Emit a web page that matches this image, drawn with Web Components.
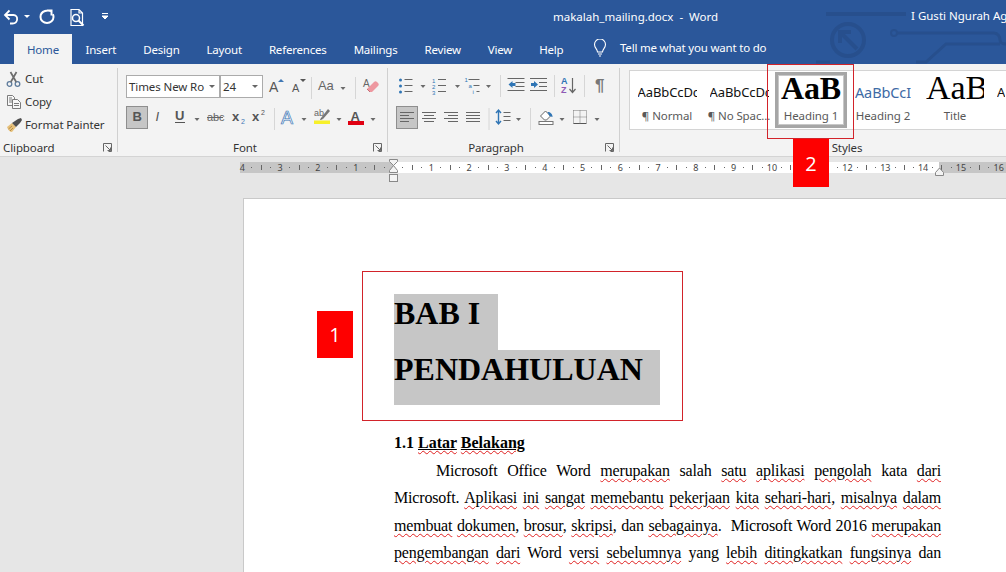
<!DOCTYPE html>
<html>
<head>
<meta charset="utf-8">
<title>makalah_mailing.docx - Word</title>
<style>
  html, body { margin: 0; height: 100%; overflow: hidden; background: #e6e6e6; }
  body { font-family: "Noto Sans", "Open Sans", sans-serif; }
</style>
</head>
<body>

<word-app>

  <word-titlebar title-text="makalah_mailing.docx  -  Word" user="I Gusti Ngurah Ag"></word-titlebar>

  <word-tabs></word-tabs>

  <word-ribbon>

    <ribbon-group label="Clipboard" width="118" launcher top="3">
      <clip-row icon="cut">Cut</clip-row>
      <clip-row icon="copy">Copy</clip-row>
      <clip-row icon="painter">Format Painter</clip-row>
    </ribbon-group>

    <ribbon-group label="Font" width="270" launcher pad="8" top="11" gap="8">
      <ribbon-row>
        <font-box w="94" caret>Times New Ro</font-box>
        <font-box w="43" caret>24</font-box>
        <r-icon name="grow" w="22"></r-icon>
        <r-icon name="shrink" w="22"></r-icon>
        <r-icon name="sep" w="8"></r-icon>
        <r-icon name="case" w="22"></r-icon>
        <r-icon name="caret" w="12"></r-icon>
        <r-icon name="sep" w="12"></r-icon>
        <r-icon name="eraser" w="20"></r-icon>
      </ribbon-row>
      <ribbon-row>
        <r-icon name="bold" w="22" on></r-icon>
        <r-icon name="italic" w="21"></r-icon>
        <r-icon name="underline" w="22"></r-icon>
        <r-icon name="caret" w="12"></r-icon>
        <r-icon name="strike" w="24"></r-icon>
        <r-icon name="sub" w="22"></r-icon>
        <r-icon name="sup" w="18"></r-icon>
        <r-icon name="sep" w="14"></r-icon>
        <r-icon name="effects" w="16"></r-icon>
        <r-icon name="caret" w="14"></r-icon>
        <r-icon name="highlight" w="22"></r-icon>
        <r-icon name="caret" w="12"></r-icon>
        <r-icon name="fontcolor" w="22"></r-icon>
        <r-icon name="caret" w="12"></r-icon>
      </ribbon-row>
    </ribbon-group>

    <ribbon-group label="Paragraph" width="232" launcher pad="8" top="9" gap="10">
      <ribbon-row>
        <r-icon name="bullets" w="21"></r-icon>
        <r-icon name="caret" w="12"></r-icon>
        <r-icon name="numbers" w="22"></r-icon>
        <r-icon name="caret" w="13"></r-icon>
        <r-icon name="multilevel" w="19"></r-icon>
        <r-icon name="caret" w="11"></r-icon>
        <r-icon name="sep" w="12"></r-icon>
        <r-icon name="outdent" w="21"></r-icon>
        <r-icon name="indent" w="22"></r-icon>
        <r-icon name="sep" w="10"></r-icon>
        <r-icon name="sort" w="20"></r-icon>
        <r-icon name="sep" w="10"></r-icon>
        <r-icon name="pilcrow" w="22"></r-icon>
      </ribbon-row>
      <ribbon-row>
        <r-icon name="left" w="22" on></r-icon>
        <r-icon name="center" w="22"></r-icon>
        <r-icon name="right" w="22"></r-icon>
        <r-icon name="justify" w="22"></r-icon>
        <r-icon name="sep" w="9"></r-icon>
        <r-icon name="spacing" w="21"></r-icon>
        <r-icon name="caret" w="9"></r-icon>
        <r-icon name="sep" w="14"></r-icon>
        <r-icon name="shading" w="19"></r-icon>
        <r-icon name="caret" w="12"></r-icon>
        <r-icon name="borders" w="24"></r-icon>
        <r-icon name="caret" w="10"></r-icon>
      </ribbon-row>
    </ribbon-group>

    <ribbon-group label="Styles" width="454" pad="9" top="6">
      <style-gallery>
        <style-item name="¶ Normal" sample="AaBbCcDc"></style-item>
        <style-item name="¶ No Spac..." sample="AaBbCcDc"></style-item>
        <style-item name="Heading 1" sample="AaB" kind="h1" selected></style-item>
        <style-item name="Heading 2" sample="AaBbCcI" kind="h2"></style-item>
        <style-item name="Title" sample="AaB" kind="title"></style-item>
        <style-item name="" sample="A"></style-item>
      </style-gallery>
    </ribbon-group>

  </word-ribbon>

  <word-ruler></word-ruler>

  <word-page>
    <doc-heading width="104">BAB I</doc-heading>
    <doc-heading width="266">PENDAHULUAN</doc-heading>
    <doc-subhead>1.1 <spell-word under>Latar</spell-word> <spell-word under>Belakang</spell-word></doc-subhead>
    <doc-para>Microsoft Office Word <spell-word>merupakan</spell-word> salah <spell-word>satu</spell-word> <spell-word>aplikasi</spell-word> <spell-word>pengolah</spell-word> kata <spell-word>dari</spell-word><br>Microsoft. <spell-word>Aplikasi</spell-word> <spell-word>ini</spell-word> <spell-word>sangat</spell-word> <spell-word>memebantu</spell-word> <spell-word>pekerjaan</spell-word> <spell-word>kita</spell-word> <spell-word>sehari-hari</spell-word>, <spell-word>misalnya</spell-word> <spell-word>dalam</spell-word><br><spell-word>membuat</spell-word> <spell-word>dokumen</spell-word>, <spell-word>brosur</spell-word>, <spell-word>skripsi</spell-word>, dan <spell-word>sebagainya</spell-word>.&nbsp; Microsoft Word 2016 <spell-word>merupakan</spell-word><br><spell-word>pengembangan</spell-word> <spell-word>dari</spell-word> Word <spell-word>versi</spell-word> <spell-word>sebelumnya</spell-word> yang <spell-word>lebih</spell-word> <spell-word>ditingkatkan</spell-word> <spell-word>fungsinya</spell-word> dan</doc-para>
  </word-page>

  <!-- tutorial annotations drawn over the screenshot -->
  <call-out box="362,271,321,150"></call-out>
  <call-out badge="1" box="317,311,36,47"></call-out>
  <call-out box="767,64,87,75"></call-out>
  <call-out badge="2" box="793,139,36,48"></call-out>

</word-app>

<script>

const UI_FONT = '"Noto Sans", "Open Sans", sans-serif';

// every icon is drawn in a 16x16 box, centred in its cell
const T = ( x, y, size, fill, str, extra = '' ) =>
  `<text x="${ x }" y="${ y }" font-size="${ size }" fill="${ fill }" font-family="Liberation Sans, sans-serif" ${ extra }>${ str }</text>`;

const lines = ( list, stroke = '#666' ) =>
  list.map( l => `<path d="M${ l[ 0 ] } ${ l[ 2 ] }H${ l[ 1 ] }" stroke="${ stroke }" fill="none"/>` ).join( '' );

const ICONS = {

  caret: `<path d="M5.5 8h5l-2.5 3z" fill="#6a6a6a"/>`,
  sep: `<path d="M8.5 -2v22" stroke="#d6d6d6" fill="none"/>`,

  cut: `<g fill="none"><circle cx="3.5" cy="13" r="2.3" stroke="#5f7c9c" stroke-width="1.3"/><circle cx="11.5" cy="13" r="2.3" stroke="#5f7c9c" stroke-width="1.3"/><path d="M4.8 11 10.5 1M10.2 11 4.5 1" stroke="#6d6d6d" stroke-width="1.7"/></g>`,
  copy: `<g fill="#f8f8f8" stroke="#6d6d6d" stroke-width=".9"><path d="M1.500 1.500h5l2 2v8h-7z"/><path d="M3 4h3M3 6h3M3 8h3" fill="none"/><path d="M6.500 5.500h5l3 3v6h-8z"/><path d="M8 9.500h5M8 11.500h5" fill="none"/></g>`,
  painter: `<path d="M1 10 6 6l4 4-4 5c-2 0-4-2-5-5z" fill="#e6c07a"/><path d="M2.500 12 6 9M4 14l3-3" stroke="#b78d45" fill="none"/><path d="M6 6l6-4 3-1 1 2-2 3-4 4z" fill="#4f4f4f"/>`,

  grow: T( 3, 13, 14, '#555', 'A' ) + `<path d="M12 3h6l-3-3z" fill="#3f78b5"/>`,
  shrink: T( 4, 13, 11, '#555', 'A' ) + `<path d="M12 0h6l-3 3z" fill="#555"/>`,
  case: T( 0, 11, 13, '#666', 'Aa' ),
  eraser: T( 0, 8, 10, '#666', 'A' ) + `<path d="M4 10 11 3c1-1 2-1 3 0l1 1c1 1 1 2 0 3l-6 6H7z" fill="#ee98a0"/><path d="M4 10l3 3" stroke="#c87078"/>`,

  bold: T( 3.5, 11, 13, '#555', 'B', 'font-weight="700"' ),
  italic: T( 5, 11, 13, '#555', 'I', 'font-style="italic" font-family="Liberation Serif, serif"' ),
  underline: T( 3, 10, 13, '#555', 'U', 'font-weight="700"' ) + `<path d="M3 12.500h10" stroke="#555" fill="none"/>`,
  strike: T( 0, 11, 11, '#666', 'abc' ) + `<path d="M0 7.500h16" stroke="#666" fill="none"/>`,
  sub: T( 2, 11, 13, '#555', 'x', 'font-weight="700"' ) + T( 11, 14, 7, '#3f78b5', '2' ),
  sup: T( 2, 11, 13, '#555', 'x', 'font-weight="700"' ) + T( 11, 5, 7, '#555', '2' ),
  effects: T( 0, 14, 18, '#eef4fb', 'A', 'stroke="#3f78b5" stroke-width=".7"' ),
  highlight: T( 0, 6, 9, '#666', 'ab' ) + `<path d="M7 8 14 -1l2 2-7 8z" fill="#777"/><path d="M7 8l-1 2 3-1z" fill="#444"/><rect x="0" y="10.500" width="16" height="3.500" fill="#f7f02a"/>`,
  fontcolor: T( 2.5, 10.500, 13, '#555', 'A', 'font-weight="700"' ) + `<rect x="0" y="11" width="16" height="4" fill="#e00012"/>`,

  bullets: `<g fill="#2f75b5"><circle cx="2" cy="3" r="1.5"/><circle cx="2" cy="9" r="1.5"/><circle cx="2" cy="15" r="1.5"/></g>` + lines( [ [ 6, 14, 2.5 ], [ 6, 14, 8.5 ], [ 6, 14, 14.5 ] ] ),
  numbers: T( 0, 5.5, 6, '#2f75b5', '1' ) + T( 0, 11.5, 6, '#2f75b5', '2' ) + T( 0, 17.5, 6, '#2f75b5', '3' ) + lines( [ [ 6, 14, 2.5 ], [ 6, 14, 8.5 ], [ 6, 14, 14.5 ] ] ),
  multilevel: T( -1, 5, 6, '#2f75b5', '1' ) + T( 3, 11, 6, '#2f75b5', 'a' ) + T( 7, 17, 6, '#2f75b5', 'i' ) + lines( [ [ 3, 14, 2.5 ], [ 8, 14, 8.5 ], [ 11, 14, 14.5 ] ] ),
  outdent: lines( [ [ -1, 16, 1.5 ], [ 7, 16, 5.5 ], [ 7, 16, 9.5 ], [ -1, 16, 13.5 ] ] ) + `<path d="M0 7.5 4 4v2h3v3H4v2z" fill="#2f75b5"/>`,
  indent: lines( [ [ 0, 17, 1.5 ], [ 9, 17, 5.5 ], [ 9, 17, 9.5 ], [ 0, 17, 13.5 ] ] ) + `<path d="M8 7.5 4 4v2H1v3h3v2z" fill="#2f75b5"/>`,
  sort: T( 0, 7, 9, '#2f75b5', 'A', 'font-weight="700"' ) + T( 0, 16, 9, '#8e5ab5', 'Z', 'font-weight="700"' ) + `<path d="M11.5 1v14M8.5 12l3 3.5 3-3.5" stroke="#666" stroke-width="1.2" fill="none"/>`,
  pilcrow: T( 3, 14, 17, '#777', '¶', 'font-weight="700"' ),

  left: lines( [ [ 1, 15, 2.5 ], [ 1, 10, 5.5 ], [ 1, 15, 8.5 ], [ 1, 10, 11.5 ] ] ),
  center: lines( [ [ 1, 15, 2.5 ], [ 3, 13, 5.5 ], [ 1, 15, 8.5 ], [ 3, 13, 11.5 ] ] ),
  right: lines( [ [ 1, 15, 2.5 ], [ 5, 15, 5.5 ], [ 1, 15, 8.5 ], [ 5, 15, 11.5 ] ] ),
  justify: lines( [ [ 1, 15, 2.5 ], [ 1, 15, 5.5 ], [ 1, 15, 8.5 ], [ 1, 15, 11.5 ] ] ),
  spacing: `<path d="M3 0v14M0.5 3 3 0l2.5 3M0.5 11 3 14l2.5-3" stroke="#2f75b5" stroke-width="1.4" fill="none"/>` + lines( [ [ 8, 15, 2.5 ], [ 8, 15, 6.5 ], [ 8, 15, 10.5 ] ] ),
  shading: `<path d="M2 6 7 1l5 5-4 4H6z" fill="#fff" stroke="#666"/><path d="M9 2c3 0 5 2 5 5l-3-1z" fill="#2f75b5"/><rect x="0.5" y="11.500" width="14" height="3" fill="#fff" stroke="#777"/>`,
  borders: `<path d="M1.5 13.500h13" stroke="#555" fill="none"/><path d="M1.5 .5h13v13M1.5 .5v13M8 .5v13M1.5 7h13" stroke="#777" stroke-dasharray="1 1" fill="none"/>`

};

class RIcon extends HTMLElement {

  connectedCallback () {

    const w = +this.getAttribute( 'w' ) || 22;
    const on = this.hasAttribute( 'on' );
    const shadow = this.attachShadow( { mode: 'open' } );

    shadow.innerHTML = `
      <style>
        :host { display: block; flex: 0 0 ${ w }px; width: ${ w }px; height: 23px; box-sizing: border-box; }
        :host([on]) { background: #c6c6c6; border: 1px solid #8e8e8e; }
        svg { display: block; overflow: visible; }
      </style>
      <svg width="${ on ? w - 2 : w }" height="${ on ? 21 : 23 }" viewBox="0 0 ${ on ? w - 2 : w } ${ on ? 21 : 23 }">
        <g transform="translate(${ ( ( on ? w - 2 : w ) - 16 ) / 2 }, ${ on ? 3 : 4 })">${ ICONS[ this.getAttribute( 'name' ) ] || '' }</g>
      </svg>
    `;

  }

}

class WordApp extends HTMLElement {

  constructor () {

    super();
    this.attachShadow( { mode: 'open' } ).innerHTML = `
      <style>
        :host { display: flex; flex-direction: column; position: relative; width: 1006px; height: 572px; overflow: hidden; background: #e6e6e6; }
      </style>
      <slot></slot>
    `;

  }

}

class WordTitlebar extends HTMLElement {

  connectedCallback () {

    this.attachShadow( { mode: 'open' } ).innerHTML = `
      <style>
        :host { display: flex; flex: 0 0 34px; position: relative; z-index: 1; align-items: center; color: #fff; font: 11.5px ${ UI_FONT }; background: #2b579a; white-space: pre; }
        .qat { display: flex; flex: 0 0 553px; align-items: center; }
        .title { position: relative; margin-top: -1px; }
        .user { position: relative; margin-left: auto; width: 95px; overflow: hidden; margin-top: -3px; }
        .circuit { position: absolute; left: 810px; top: 0; }
      </style>
      <svg class="circuit" width="196" height="64" fill="none" stroke="#274f8d" stroke-width="3">
        <path d="M16 14H96" stroke-width="4"/>
        <circle cx="38" cy="40" r="16" stroke-width="4"/>
        <path d="M47 49 31 33M30 43V32H41" stroke-width="4"/>
        <circle cx="84" cy="33" r="3" stroke-width="2"/>
        <path d="M87 33H184c4 0 6 4 6 7 0 2 2 4 6 4M190 44H136L116 62H106M6 62H20"/>
      </svg>
      <div class="qat">
        <svg width="130" height="34" fill="none" stroke="#fff" stroke-width="1.8">
          <path d="M9.500 10.500 5 15l4.500 4.500M5 15h8.500c5 0 5 8.500-1 8.500H10"/>
          <path d="M24 15h6l-3 3z" fill="#fff" stroke="none"/>
          <path d="M47 10.500h4.500V15.500M51 11c-2-.7-4-.7-6 0-3 1-4.500 3.500-4.500 6 0 3.500 3 6 6.500 6s6.500-2.500 6.500-6c0-1-.2-2-.6-2.800" stroke-width="2"/>
          <path d="M79 9.500h-8v16h11.500V13zM79 9.500V13h3.500" stroke-width="1.200"/>
          <circle cx="76" cy="18" r="3.500" stroke-width="1.500"/>
          <path d="M78.500 20.500l5 5" stroke-width="2"/>
          <path d="M102 13.500h6M102 16h6l-3 3z" fill="#fff" stroke-width="1"/>
        </svg>
      </div>
      <div class="title">${ this.getAttribute( 'title-text' ) }</div>
      <div class="user">${ this.getAttribute( 'user' ) }</div>
    `;

  }

}

class WordTabs extends HTMLElement {

  connectedCallback () {

    const tabs = [ 'Home', 'Insert', 'Design', 'Layout', 'References', 'Mailings', 'Review', 'View', 'Help' ];

    this.attachShadow( { mode: 'open' } ).innerHTML = `
      <style>
        :host { display: flex; flex: 0 0 30px; align-items: stretch; padding-left: 14px; color: #fff; font: 11.5px ${ UI_FONT }; letter-spacing: -.2px; background: #2b579a; }
        .tab { display: flex; align-items: center; padding: 0 13.5px 0; }
        .tab.active { width: 58px; box-sizing: border-box; padding: 0; justify-content: center; color: #2b579a; background: #f3f3f3; }
        .tell { display: flex; align-items: center; gap: 13px; margin-left: 16px; margin-top: -3px; }
        svg { display: block; }
      </style>
      ${ tabs.map( ( t, i ) => `<div class="tab ${ i ? '' : 'active' }">${ t }</div>` ).join( '' ) }
      <div class="tell">
        <svg width="14" height="18" fill="none" stroke="#fff" stroke-width="1.100">
          <path d="M4.500 13c0-3-3-4-3-7.500a5.500 5.500 0 0 1 11 0C12.500 9 9.500 10 9.500 13zM5 15h4M6 17h2"/>
        </svg>
        <span>Tell me what you want to do</span>
      </div>
    `;

  }

}

class WordRibbon extends HTMLElement {

  constructor () {

    super();
    this.attachShadow( { mode: 'open' } ).innerHTML = `
      <style>
        :host { display: flex; flex: 0 0 93px; box-sizing: border-box; overflow: hidden; color: #333; font: 11.5px ${ UI_FONT }; letter-spacing: -.1px; background: #f3f3f3; border-bottom: 1px solid #d4d4d4; }
      </style>
      <slot></slot>
    `;

  }

}

class RibbonGroup extends HTMLElement {

  connectedCallback () {

    const width = this.getAttribute( 'width' );
    const pad = this.getAttribute( 'pad' ) || 0;
    const top = this.getAttribute( 'top' ) || 2;
    const gap = this.getAttribute( 'gap' ) || 0;

    this.attachShadow( { mode: 'open' } ).innerHTML = `
      <style>
        :host { display: flex; flex: 0 0 ${ width }px; position: relative; flex-direction: column; box-sizing: border-box; }
        :host::after { content: ""; position: absolute; right: 0; top: 4px; bottom: 4px; width: 1px; background: #d0d0d0; }
        .body { display: flex; flex: 1; flex-direction: column; min-height: 0; gap: ${ gap }px; padding: ${ top }px 0 0 ${ pad }px; }
        .label { display: flex; flex: 0 0 16px; position: relative; align-items: center; justify-content: center; padding-bottom: 1px; }
        :host([launcher]) .label { padding-right: 16px; }
        :host([label="Clipboard"]) .label { justify-content: flex-start; padding-left: 3px; }
        svg { position: absolute; right: 6px; top: 4px; }
      </style>
      <div class="body"><slot></slot></div>
      <div class="label">
        ${ this.getAttribute( 'label' ) }
        ${ this.hasAttribute( 'launcher' ) ? `<svg width="9" height="9" fill="none" stroke="#666"><path d="M.5 8.500v-8h8v8h-3M2.500 2.500l5 5M7.500 4.500v3h-3"/></svg>` : '' }
      </div>
    `;

  }

}

class RibbonRow extends HTMLElement {

  constructor () {

    super();
    this.attachShadow( { mode: 'open' } ).innerHTML = `
      <style>:host { display: flex; align-items: center; height: 23px; }</style>
      <slot></slot>
    `;

  }

}

class ClipRow extends HTMLElement {

  connectedCallback () {

    this.attachShadow( { mode: 'open' } ).innerHTML = `
      <style>
        :host { display: flex; align-items: center; gap: 3px; height: 23px; padding-left: 6px; }
        svg { display: block; overflow: visible; }
      </style>
      <svg width="16" height="16">${ ICONS[ this.getAttribute( 'icon' ) ] }</svg>
      <slot></slot>
    `;

  }

}

class FontBox extends HTMLElement {

  connectedCallback () {

    this.attachShadow( { mode: 'open' } ).innerHTML = `
      <style>
        :host { display: flex; flex: 0 0 ${ this.getAttribute( 'w' ) }px; align-items: center; justify-content: space-between; box-sizing: border-box; height: 23px; padding: 0 4px 0 2px; white-space: nowrap; overflow: hidden; background: #fff; border: 1px solid #ababab; }
        i { flex: none; width: 0; height: 0; border: 3px solid transparent; border-top: 3px solid #666; border-bottom: 0; }
      </style>
      <span><slot></slot></span><i></i>
    `;

  }

}

class StyleGallery extends HTMLElement {

  constructor () {

    super();
    this.attachShadow( { mode: 'open' } ).innerHTML = `
      <style>
        :host { display: flex; height: 60px; box-sizing: border-box; padding-left: 1px; background: #fff; border: 1px solid #d4d4d4; border-right: 0; }
      </style>
      <slot></slot>
    `;

  }

}

class StyleItem extends HTMLElement {

  connectedCallback () {

    const kinds = {
      h1: 'font: 700 32px/30px "Liberation Serif", serif; color: #000; max-width: none; margin-top: -7px;',
      h2: 'font-size: 14.5px; color: #3e6aa5; max-width: 59px;',
      title: 'font: 34px/30px "Liberation Serif", serif; color: #000; max-width: 58px; margin-top: -8px;'
    };

    this.attachShadow( { mode: 'open' } ).innerHTML = `
      <style>
        :host { display: flex; flex: 0 0 72px; flex-direction: column; box-sizing: border-box; align-items: center; overflow: hidden; color: #595959; }
        :host([selected]) { border: 3px solid #a6a6a6; outline: 1px solid #c8c8c8; outline-offset: -4px; height: 56px; margin-top: 1px; }
        .sample { display: flex; flex: 0 0 37px; align-items: center; justify-content: center; box-sizing: border-box; width: 100%; padding-top: 4px; overflow: hidden; white-space: nowrap; }
        :host([selected]) .sample { flex-basis: 33px; padding-top: 0; }
        .name { white-space: nowrap; }
        span { display: block; flex: none; overflow: hidden; max-width: 59px; color: #111; font-size: 13px; line-height: 18px; ${ kinds[ this.getAttribute( 'kind' ) ] || '' } }
        :host([sample="A"]) .sample { justify-content: flex-start; padding-left: 6px; }
      </style>
      <div class="sample"><span>${ this.getAttribute( 'sample' ) }</span></div>
      <div class="name">${ this.getAttribute( 'name' ) }</div>
    `;

  }

}

class WordRuler extends HTMLElement {

  connectedCallback () {

    const cm = 37.8;
    let cells = '';

    for ( let n = -4; n <= 17; n ++ ) {

      cells += `<div class="cm"><b>${ n === 0 ? '' : Math.abs( n ) }</b><i class="dot"></i><i class="tick"></i><i class="dot"></i></div>`;

    }

    this.attachShadow( { mode: 'open' } ).innerHTML = `
      <style>
        :host { display: block; flex: 0 0 41px; position: relative; box-sizing: border-box; padding-top: 5px; overflow: hidden; background: #e6e6e6; }
        .band { display: flex; height: 11px; margin-left: 240px; background: linear-gradient(to right, #c6c6c6 153px, #fff 153px, #fff 699px, #c6c6c6 699px); }
        .shift { display: flex; margin-left: -2.4px; }
        .cm { display: grid; grid-template-columns: repeat(4, 1fr); flex: 0 0 ${ cm }px; align-items: center; justify-items: center; height: 11px; }
        b { color: #444; font: 9px ${ UI_FONT }; line-height: 11px; }
        .dot { width: 1px; height: 1px; background: #666; }
        .tick { width: 1px; height: 5px; background: #666; }
        svg { position: absolute; }
      </style>
      <div class="band"><div class="shift">${ cells }</div></div>
      <svg style="left:388px;top:2px" width="12" height="24" fill="#f3f3f3" stroke="#888">
        <path d="M1.500 .5h8v2l-4 4-4-4zM5.500 6.500l4 5v2h-8v-2z"/>
        <rect x="1.500" y="15.500" width="8" height="7"/>
      </svg>
      <svg style="left:934px;top:10px" width="11" height="9" fill="#f3f3f3" stroke="#888">
        <path d="M5.500 1 9.500 5.500v3h-8v-3z"/>
      </svg>
    `;

  }

}

class WordPage extends HTMLElement {

  constructor () {

    super();
    this.attachShadow( { mode: 'open' } ).innerHTML = `
      <style>
        :host { display: block; flex: 1; min-height: 0; box-sizing: border-box; margin-left: 243px; padding: 95px 65px 0 150px; overflow: hidden; color: #000; background: #fff; border-left: 1px solid #c9c9c9; border-top: 1px solid #c9c9c9; }
      </style>
      <slot></slot>
    `;

  }

}

class DocHeading extends HTMLElement {

  connectedCallback () {

    this.attachShadow( { mode: 'open' } ).innerHTML = `
      <style>
        :host { display: block; width: ${ this.getAttribute( 'width' ) }px; height: 55.500px; font: 700 32px "Liberation Serif", serif; white-space: nowrap; background: #c6c6c6; }
        div { line-height: 39px; }
      </style>
      <div><slot></slot></div>
    `;

  }

}

class DocSubhead extends HTMLElement {

  constructor () {

    super();
    this.attachShadow( { mode: 'open' } ).innerHTML = `
      <style>
        :host { display: block; margin-top: 24px; font: 700 16px/27.500px "Liberation Serif", serif; }
      </style>
      <slot></slot>
    `;

  }

}

class DocPara extends HTMLElement {

  constructor () {

    super();
    this.attachShadow( { mode: 'open' } ).innerHTML = `
      <style>
        :host { display: block; font: 16px/27.500px "Liberation Serif", serif; letter-spacing: -.18px; text-align: justify; text-align-last: justify; text-indent: 42px; }
      </style>
      <slot></slot>
    `;

  }

}

class SpellWord extends HTMLElement {

  constructor () {

    super();
    // no whitespace around the span: this host is inline and sits inside a sentence
    this.attachShadow( { mode: 'open' } ).innerHTML = `<style>
        :host { display: inline; text-decoration: underline wavy #e02020 1px; text-underline-offset: 2px; }
        :host([under]) span { text-decoration: underline #000 1px; text-underline-offset: 1px; }
      </style><span><slot></slot></span>`;

  }

}

class CallOut extends HTMLElement {

  connectedCallback () {

    const [ left, top, width, height ] = this.getAttribute( 'box' ).split( ',' );
    const badge = this.getAttribute( 'badge' );

    this.attachShadow( { mode: 'open' } ).innerHTML = `
      <style>
        :host { display: flex; position: absolute; z-index: 2; left: ${ left }px; top: ${ top }px; width: ${ width }px; height: ${ height }px; box-sizing: border-box; align-items: center; justify-content: center; color: #fff; font: 20px "Open Sans", sans-serif; ${ badge ? 'background: #fe0000;' : 'border: 1px solid #d2232a;' } }
      </style>
      ${ badge || '' }
    `;

  }

}

customElements.define( 'r-icon', RIcon );
customElements.define( 'word-app', WordApp );
customElements.define( 'word-titlebar', WordTitlebar );
customElements.define( 'word-tabs', WordTabs );
customElements.define( 'word-ribbon', WordRibbon );
customElements.define( 'ribbon-group', RibbonGroup );
customElements.define( 'ribbon-row', RibbonRow );
customElements.define( 'clip-row', ClipRow );
customElements.define( 'font-box', FontBox );
customElements.define( 'style-gallery', StyleGallery );
customElements.define( 'style-item', StyleItem );
customElements.define( 'word-ruler', WordRuler );
customElements.define( 'word-page', WordPage );
customElements.define( 'doc-heading', DocHeading );
customElements.define( 'doc-subhead', DocSubhead );
customElements.define( 'doc-para', DocPara );
customElements.define( 'spell-word', SpellWord );
customElements.define( 'call-out', CallOut );

</script>
</body>
</html>
